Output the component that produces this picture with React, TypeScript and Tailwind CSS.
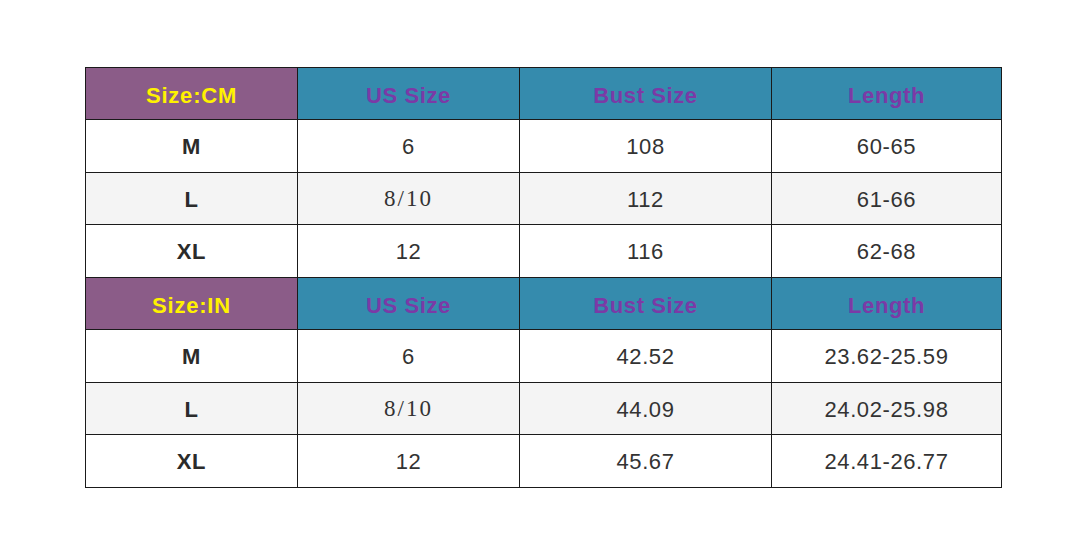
const cm = [
  ["M", "6", "108", "60-65"],
  ["L", "8/10", "112", "61-66"],
  ["XL", "12", "116", "62-68"],
];

const inch = [
  ["M", "6", "42.52", "23.62-25.59"],
  ["L", "8/10", "44.09", "24.02-25.98"],
  ["XL", "12", "45.67", "24.41-26.77"],
];

function HeaderRow({ label }: { label: string }) {
  return (
    <>
      <div className="flex items-center justify-center bg-[#8b5c88] pt-[3px] text-[22px] font-bold tracking-[0.8px] text-[#fff200]">
        {label}
      </div>
      <div className="flex items-center justify-center bg-[#358bad] pt-[3px] text-[22px] font-bold tracking-[0.6px] text-[#7b3aa6]">
        US Size
      </div>
      <div className="flex items-center justify-center bg-[#358bad] pt-[3px] text-[22px] font-bold tracking-[0.6px] text-[#7b3aa6]">
        Bust Size
      </div>
      <div className="flex items-center justify-center bg-[#358bad] pt-[3px] text-[22px] font-bold tracking-[0.6px] text-[#7b3aa6]">
        Length
      </div>
    </>
  );
}

function DataRow({ row, shaded }: { row: string[]; shaded: boolean }) {
  const bg = shaded ? "bg-[#f4f4f4]" : "bg-white";
  return (
    <>
      <div className={`flex items-center justify-center ${bg} pt-[1px] text-[22px] font-bold tracking-[0.6px] text-[#2b2b2b]`}>
        {row[0]}
      </div>
      <div
        className={`flex items-center justify-center ${bg} pt-[1px] text-[#333333] ${
          row[1] === "8/10"
            ? "font-['Liberation_Serif',serif] text-[23px] tracking-[2px]"
            : "text-[22px] tracking-[0.6px]"
        }`}
      >
        {row[1]}
      </div>
      <div className={`flex items-center justify-center ${bg} pt-[1px] text-[22px] tracking-[0.6px] text-[#333333]`}>
        {row[2]}
      </div>
      <div className={`flex items-center justify-center ${bg} pt-[1px] text-[22px] tracking-[0.6px] text-[#333333]`}>
        {row[3]}
      </div>
    </>
  );
}

export default function App() {
  return (
    <div className="h-[553px] w-[1080px] bg-white pl-[85px] pt-[67px] font-['Liberation_Sans',Arial,sans-serif]">
      <div className="grid w-[917px] grid-cols-[211px_221px_251px_229px] grid-rows-[51px_52px_51px_52px_51px_52px_51px_52px] gap-px bg-[#1a1a1a] p-px">
        <HeaderRow label="Size:CM" />
        {cm.map((r, i) => (
          <DataRow key={"cm" + i} row={r} shaded={i === 1} />
        ))}
        <HeaderRow label="Size:IN" />
        {inch.map((r, i) => (
          <DataRow key={"in" + i} row={r} shaded={i === 1} />
        ))}
      </div>
    </div>
  );
}
